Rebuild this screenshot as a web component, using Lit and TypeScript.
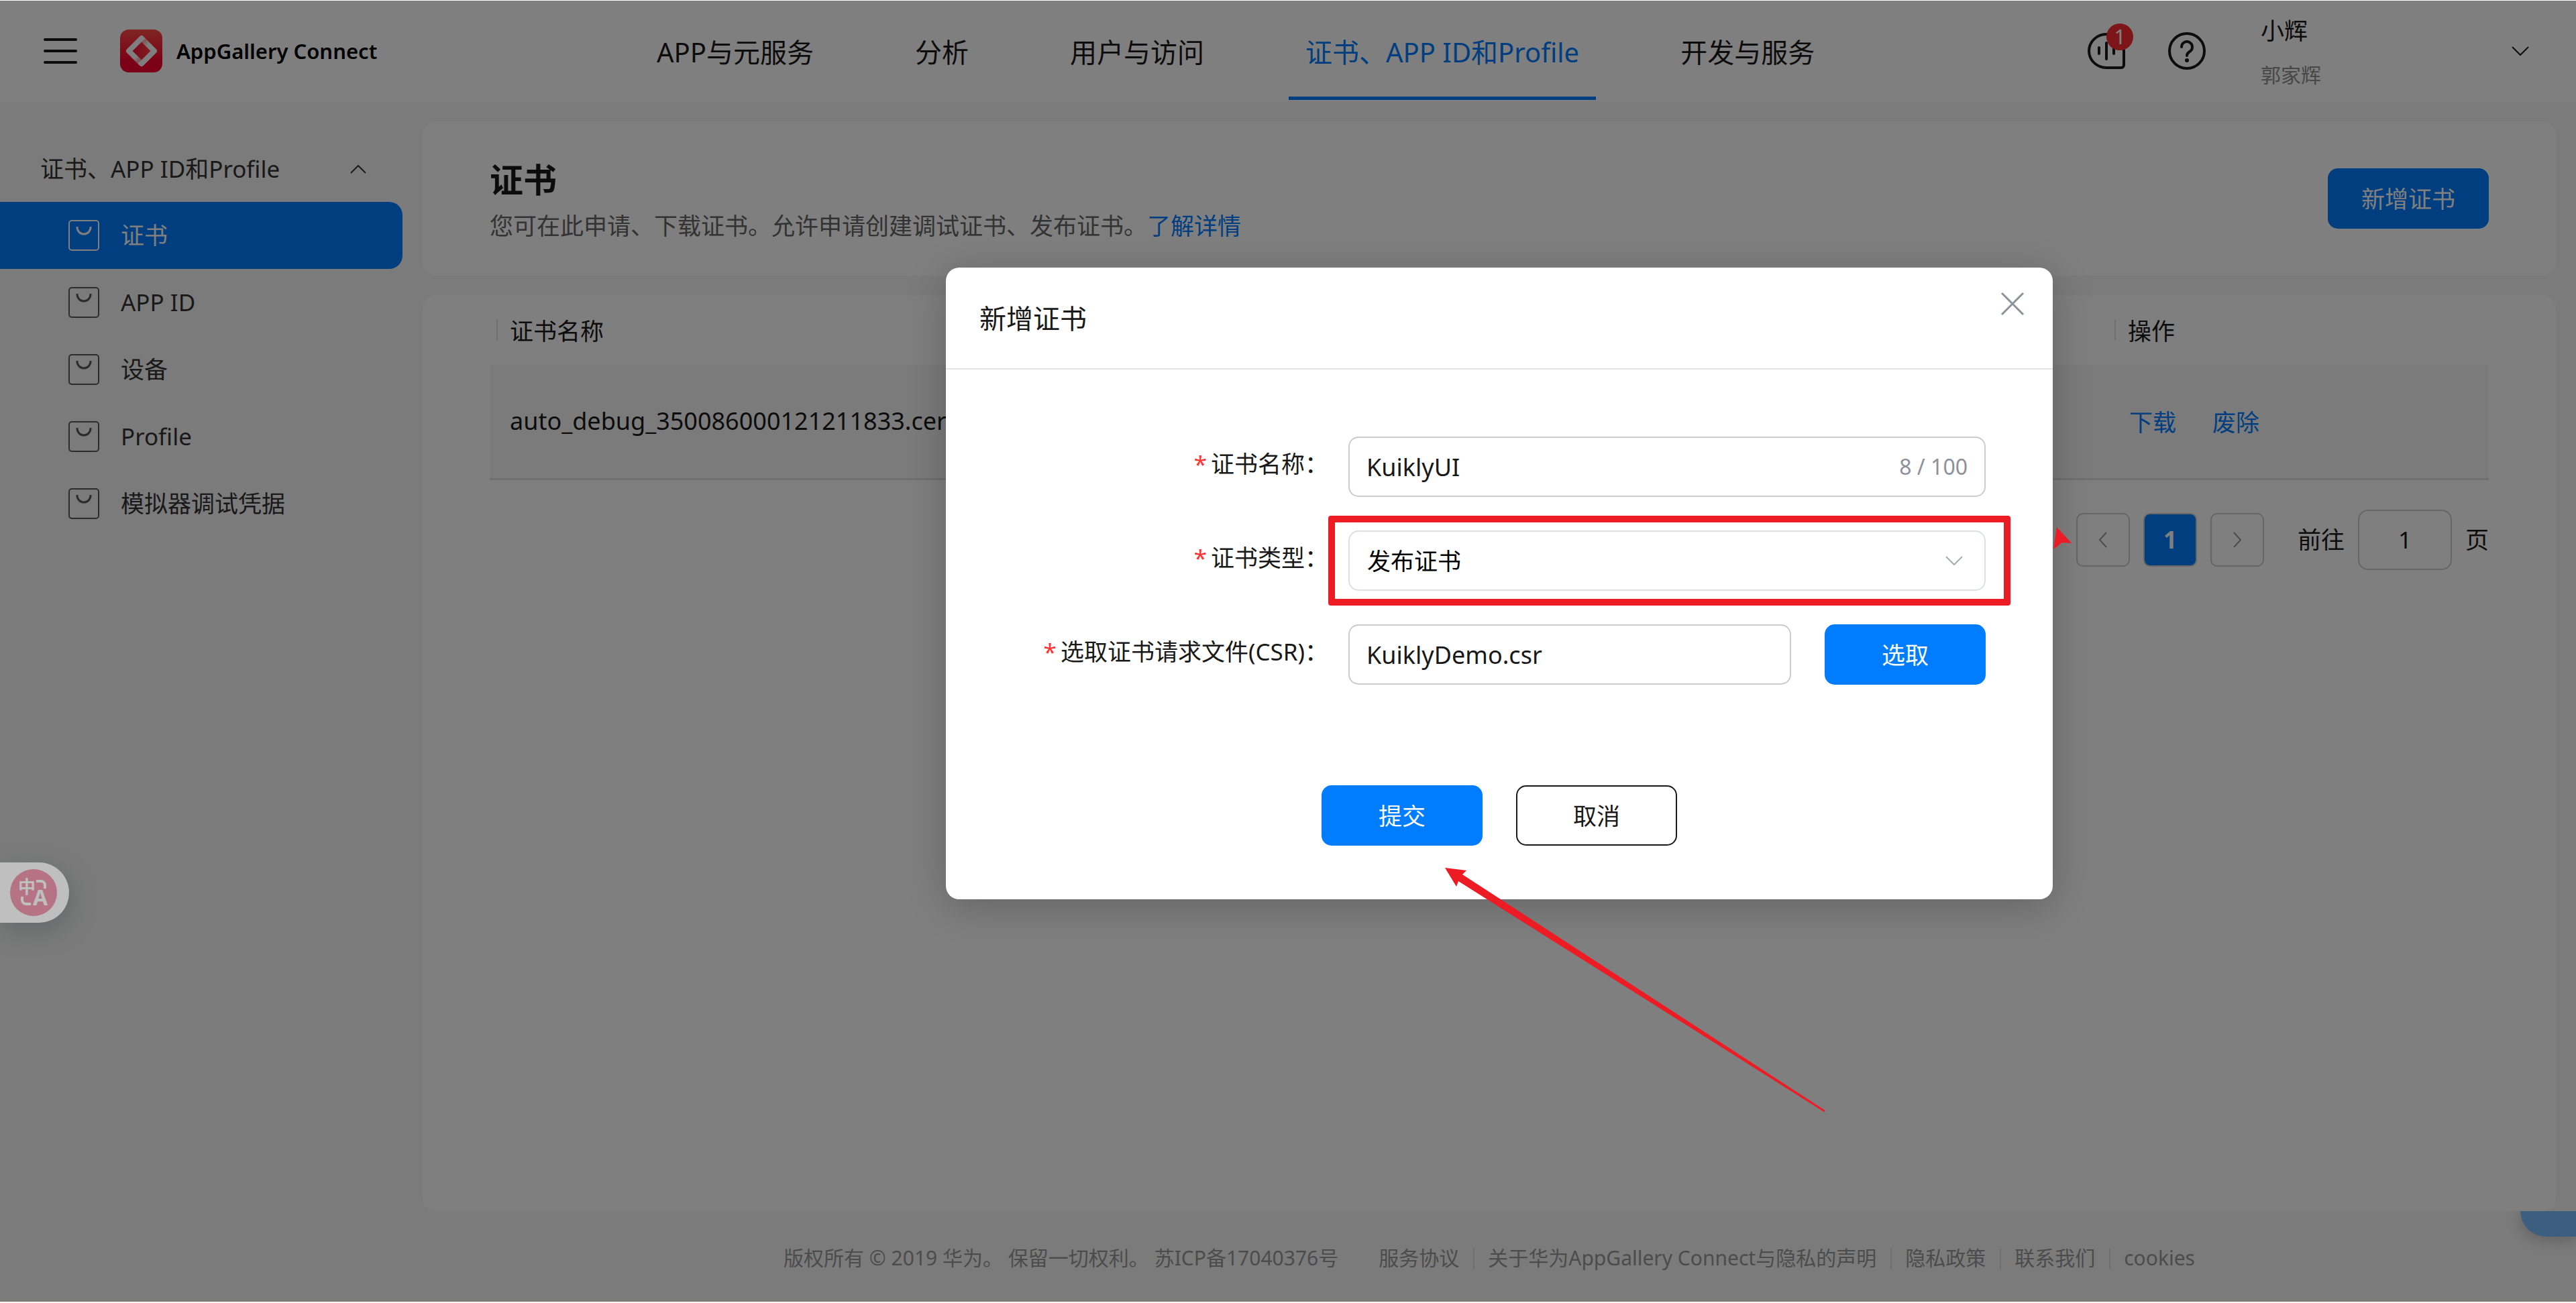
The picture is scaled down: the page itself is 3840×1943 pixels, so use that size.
import { LitElement, html, css, svg } from "lit";
import { customElement, state } from "lit/decorators.js";
import { classMap } from "lit/directives/class-map.js";

const chevron = (d: string, w: number, h: number, stroke = 2) => html`
  <svg width=${w} height=${h} viewBox="0 0 ${w} ${h}" fill="none" stroke="currentColor"
    stroke-width=${stroke} aria-hidden="true"><path d=${d} /></svg>`;

const bagIcon = html`
  <svg class="bag" width="46" height="46" viewBox="0 0 46 46" fill="none" stroke="currentColor" stroke-width="2" aria-hidden="true">
    <rect x="1" y="1" width="44" height="44" rx="4" />
    <path d="M13 10v1a10 10 0 0 0 20 0v-1" stroke-width="3" />
  </svg>`;

const logoIcon = html`
  <svg width="64" height="64" viewBox="0 0 64 64" aria-hidden="true">
    <defs>
      <linearGradient id="tile" x1="0" y1="0" x2="0" y2="1">
        <stop offset="0" stop-color="#ff4a45" />
        <stop offset="0.7" stop-color="#f8062f" />
        <stop offset="1" stop-color="#f8002f" />
      </linearGradient>
      <linearGradient id="core" x1="0" y1="0" x2="1" y2="0">
        <stop offset="0" stop-color="#f5002c" />
        <stop offset="1" stop-color="#ff4a45" />
      </linearGradient>
      <linearGradient id="fold-a" x1="0" y1="0" x2="1" y2="1">
        <stop offset="0" stop-color="#ff4a45" stop-opacity="0.5" />
        <stop offset="1" stop-color="#ff4a45" stop-opacity="0" />
      </linearGradient>
      <linearGradient id="fold-b" x1="1" y1="1" x2="0" y2="0">
        <stop offset="0" stop-color="#f8002f" stop-opacity="0.4" />
        <stop offset="1" stop-color="#f8002f" stop-opacity="0" />
      </linearGradient>
    </defs>
    <rect x="0" y="0" width="63" height="64" rx="13" fill="url(#tile)" />
    <path d="M32 13 51 32 32 51 13 32Z" fill="url(#core)" stroke="#fff" stroke-width="8" stroke-linejoin="round" />
    <path d="M35 16 42 23" stroke="url(#fold-a)" stroke-width="8" />
    <path d="M29 48 22 41" stroke="url(#fold-b)" stroke-width="8" />
  </svg>`;

const messageIcon = html`
  <svg width="56" height="54" viewBox="0 0 56 54" fill="none" stroke="currentColor" stroke-width="4" stroke-linecap="round" aria-hidden="true">
    <path d="M28 2a26 25 0 0 0-26 25 26 25 0 0 0 26 25h22a4 4 0 0 0 4-4V27A26 25 0 0 0 28 2Z" />
    <path d="M17 22v9M28 15v24M39 22v9" />
  </svg>`;

const helpIcon = html`
  <svg width="56" height="56" viewBox="0 0 56 56" fill="none" stroke="currentColor" stroke-width="4" aria-hidden="true">
    <circle cx="28" cy="28" r="26" />
    <path d="M20 22a8 8 0 1 1 12 7c-3 2-4 3-4 6" stroke-linecap="round" />
    <circle cx="28" cy="42" r="3" fill="currentColor" stroke="none" />
  </svg>`;

const arrowShape = svg`<path d="M0 0 32 4 26 10 567 362 565 364 20 20 17 28Z" />`;

@customElement("app-root")
export class AppRoot extends LitElement {
  @state() private active = 3;
  @state() private certName = "KuiklyUI";

  private tabs = ["APP与元服务", "分析", "用户与访问", "证书、APP ID和Profile", "开发与服务"];
  private menu = ["证书", "APP ID", "设备", "Profile", "模拟器调试凭据"];
  private links = ["服务协议", "关于华为AppGallery Connect与隐私的声明", "隐私政策", "联系我们", "cookies"];

  static styles = css`
    :host {
      display: block;
      font-family: "Noto Sans", "Noto Sans CJK SC", sans-serif;
      font-size: 35px;
      line-height: 50px;
      color: #191919;
    }
    * { box-sizing: border-box; }
    svg { display: block; flex: none; }
    a { color: #007dff; text-decoration: none; }
    h1, h2, p { margin: 0; }
    button, input, select { font: inherit; color: inherit; margin: 0; }
    button { cursor: pointer; padding: 0; border: 0; background: none; }

    .page {
      position: relative;
      display: flex;
      flex-direction: column;
      min-height: 100vh;
      background: #f7f7f7;
      border-top: 1px solid #fff;
      border-bottom: 2px solid #faf4f5;
    }

    .header { display: flex; align-items: center; height: 150px; padding-right: 70px; background: #fff; }
    .brand { display: flex; align-items: center; flex: 0 0 954px; padding-left: 65px; }
    .burger { display: flex; flex-direction: column; gap: 13px; width: 50px; margin-right: 64px; }
    .burger span { height: 4px; border-radius: 2px; background: #191919; }
    .brand-name { margin-left: 20px; font-size: 31px; font-weight: 600; color: #000; }
    .tabs { display: flex; flex: 1; align-self: flex-start; gap: 101px; font-size: 40px; }
    .tab { height: 148px; padding: 10px 25px 0; border-bottom: 5px solid transparent; line-height: 134px; color: #191919; white-space: nowrap; }
    .tab.on { color: #007dff; border-color: #007dff; }
    .actions { display: flex; align-items: center; }
    .message { position: relative; margin-right: 64px; }
    .badge {
      position: absolute; top: -14px; right: -12px; width: 40px; height: 40px; border-radius: 50%;
      background: #fa2d33; color: #fff; font-size: 30px; line-height: 40px; text-align: center;
    }
    .user { display: flex; align-items: center; justify-content: space-between; width: 400px; margin-left: 82px; text-align: left; }
    .user-names { display: flex; flex-direction: column; gap: 20px; line-height: 46px; padding-top: 6px; }
    .user-sub { font-size: 30px; color: #8f8f8f; }

    .body { display: flex; flex: 1; }
    .side { flex: 0 0 630px; padding: 52px 30px 0 0; color: #333; }
    .group { display: flex; align-items: center; justify-content: space-between; width: 100%; height: 98px; padding: 0 54px 0 60px; color: #333; }
    .item { display: flex; align-items: center; gap: 32px; height: 100px; padding-left: 102px; color: #333; }
    .bag { color: #595959; }
    .item.on { background: #007dff; color: #fff; border-radius: 0 20px 20px 0; }
    .item.on .bag { color: #fff; }

    .main { display: flex; flex: 1; flex-direction: column; min-width: 0; padding-top: 30px; }
    .card { margin-right: 30px; border-radius: 20px; background: #fff; }
    .intro { display: flex; align-items: center; justify-content: space-between; height: 230px; padding: 0 100px; margin-bottom: 30px; }
    .intro-text { padding-top: 12px; }
    .intro h1 { margin-bottom: 8px; font-size: 50px; line-height: 62px; }
    .intro p { color: #666; line-height: 60px; }
    .primary { width: 240px; height: 90px; border-radius: 15px; background: #007dff; color: #fff; padding-top: 2px; }
    .listing { flex: 1; padding: 0 100px; }

    table { width: 100%; border-collapse: collapse; table-layout: fixed; text-align: left; }
    th { height: 103px; padding: 2px 0 0 10px; font-weight: 400; }
    th span { position: relative; display: block; padding-left: 20px; }
    th span::before { content: ""; position: absolute; left: 0; top: 8px; width: 2px; height: 30px; background: #dcdcdc; }
    td { height: 170px; padding: 0 0 0 30px; border-bottom: 3px solid #dedede; background: #f7f7f7; }
    .file { font-size: 36px; }
    .ops { width: 568px; }
    .row-links { display: flex; gap: 54px; padding: 3px 0 0 2px; }

    .pager { display: flex; align-items: center; justify-content: flex-end; margin-top: 44px; }
    .page-btn { display: flex; align-items: center; justify-content: center; width: 80px; height: 80px; margin-right: 20px; border: 2px solid #ccc; border-radius: 10px; color: #999; }
    .page-btn.on { background: #007dff; color: #fff; font-weight: 700; }
    .jump { display: flex; align-items: center; gap: 20px; margin-left: 30px; }
    .jump input { width: 140px; height: 90px; padding: 0; border: 2px solid #ccc; border-radius: 15px; background: none; text-align: center; }

    .footer { position: relative; overflow: hidden; display: flex; justify-content: center; height: 135px; padding: 50px 30px 0 0; font-size: 30px; line-height: 40px; color: #999; }
    .copy { margin-right: 60px; }
    .links { display: flex; gap: 43px; }
    .links a { position: relative; color: #999; }
    .links a + a::before { content: ""; position: absolute; left: -22px; top: 6px; width: 2px; height: 30px; background: #dcdcdc; }
    .helper { position: absolute; top: 0; right: 0; width: 83px; height: 38px; border-radius: 0 0 0 44px; background: #7abeff; box-shadow: 0 4px 24px rgba(0, 0, 0, 0.25); }

    .mask { position: absolute; inset: 0; padding: 398px 0 0 630px; background: rgba(0, 0, 0, 0.5); }
    .dialog { position: relative; width: 1650px; margin: 0 auto; border-radius: 20px; background: #fff; box-shadow: 0 10px 60px rgba(0, 0, 0, 0.22); color: #191919; }
    .dialog-head { display: flex; justify-content: space-between; height: 152px; padding: 36px 42px 0 50px; border-bottom: 2px solid #e4e4e4; }
    .dialog-head h2 { padding-top: 15px; font-size: 40px; font-weight: 400; }
    .close { height: 36px; color: #8d9199; }
    .form { display: flex; flex-direction: column; gap: 50px; padding: 100px 100px 0; }
    .field { display: flex; }
    .label { flex: 0 0 500px; padding: 16px 30px 0 0; text-align: right; white-space: nowrap; }
    .star { margin-right: 6px; color: #ff3333; }
    .control { position: relative; flex: 1; display: flex; gap: 50px; }
    .box { flex: 1; min-width: 0; width: 100%; height: 90px; padding: 0 25px; border: 2px solid #ccc; border-radius: 15px; background: #fff; outline: none; font-size: 36px; }
    select.box { appearance: none; border-color: #dcdfe6; padding: 2px 26px 0; color: #000; font-size: 35px; }
    .count { position: absolute; right: 27px; top: 20px; font-size: 32px; color: #8d9199; }
    .drop { position: absolute; right: 34px; top: 38px; color: #a8abb2; pointer-events: none; }
    .mark { position: absolute; inset: -22px -37px -22px -30px; border: 10px solid #ed1c24; border-radius: 4px; pointer-events: none; }
    .dialog-foot { display: flex; justify-content: center; gap: 50px; padding: 150px 0 80px; }
    .ghost { width: 240px; height: 90px; border: 2px solid #191919; border-radius: 15px; background: #fff; padding-top: 2px; }
    .pointer { position: absolute; left: 744px; top: 895px; fill: #ed1c24; pointer-events: none; }
    .pointer-tip { position: absolute; left: 1650px; top: 386px; fill: #ed1c24; }

    .translate { position: absolute; left: 0; top: 1285px; display: flex; align-items: center; width: 103px; height: 90px; padding-left: 15px; border-radius: 0 45px 45px 0; background: #bfbfbf; box-shadow: 4px 12px 32px rgba(80, 90, 90, 0.5); }
    .translate text { fill: #bfbfbf; font-weight: 700; }
  `;

  render() {
    return html`
      <div class="page">
        <header class="header">
          <div class="brand">
            <button class="burger" aria-label="菜单"><span></span><span></span><span></span></button>
            ${logoIcon}
            <span class="brand-name">AppGallery Connect</span>
          </div>
          <nav class="tabs">
            ${this.tabs.map((t, i) => html`
              <a href="#" class=${classMap({ tab: true, on: i === this.active })}
                @click=${(e: Event) => { e.preventDefault(); this.active = i; }}>${t}</a>`)}
          </nav>
          <div class="actions">
            <button class="message" aria-label="消息">${messageIcon}<span class="badge">1</span></button>
            <button aria-label="帮助">${helpIcon}</button>
            <button class="user">
              <span class="user-names"><span>小辉</span><span class="user-sub">郭家辉</span></span>
              ${chevron("M1 1 13 13 25 1", 26, 14)}
            </button>
          </div>
        </header>

        <div class="body">
          <aside class="side">
            <button class="group">证书、APP ID和Profile ${chevron("M1 12 12 1 23 12", 24, 13)}</button>
            ${this.menu.map((m, i) => html`
              <a href="#" class=${classMap({ item: true, on: i === 0 })}>${bagIcon}<span>${m}</span></a>`)}
          </aside>

          <main class="main">
            <section class="card intro">
              <div class="intro-text">
                <h1>证书</h1>
                <p>您可在此申请、下载证书。允许申请创建调试证书、发布证书。<a href="#">了解详情</a></p>
              </div>
              <button class="primary">新增证书</button>
            </section>

            <section class="card listing">
              <table>
                <thead>
                  <tr><th scope="col"><span>证书名称</span></th><th scope="col" class="ops"><span>操作</span></th></tr>
                </thead>
                <tbody>
                  <tr>
                    <td class="file">auto_debug_350086000121211833.cer</td>
                    <td><div class="row-links"><a href="#">下载</a><a href="#">废除</a></div></td>
                  </tr>
                </tbody>
              </table>
              <div class="pager">
                <button class="page-btn" aria-label="上一页">${chevron("M12 1 2 12 12 23", 14, 24)}</button>
                <button class="page-btn on">1</button>
                <button class="page-btn" aria-label="下一页">${chevron("M2 1 12 12 2 23", 14, 24)}</button>
                <label class="jump">前往 <input type="text" .value=${"1"} /> 页</label>
              </div>
            </section>

            <footer class="footer">
              <span class="copy">版权所有 © 2019 华为。 保留一切权利。 苏ICP备17040376号</span>
              <nav class="links">${this.links.map((l) => html`<a href="#">${l}</a>`)}</nav>
              <div class="helper"></div>
            </footer>
          </main>
        </div>

        <div class="mask">
          <div class="dialog" role="dialog" aria-modal="true" aria-labelledby="dialog-title">
            <div class="dialog-head">
              <h2 id="dialog-title">新增证书</h2>
              <button class="close" aria-label="关闭">${chevron("M2 2 34 34M34 2 2 34", 36, 36, 3)}</button>
            </div>
            <form @submit=${(e: Event) => e.preventDefault()}>
              <div class="form">
                <div class="field">
                  <label class="label" for="name"><span class="star">*</span>证书名称：</label>
                  <div class="control">
                    <input id="name" class="box" type="text" maxlength="100" .value=${this.certName}
                      @input=${(e: Event) => { this.certName = (e.target as HTMLInputElement).value; }} />
                    <span class="count">${this.certName.length} / 100</span>
                  </div>
                </div>
                <div class="field">
                  <label class="label" for="type"><span class="star">*</span>证书类型：</label>
                  <div class="control">
                    <select id="type" class="box"><option>发布证书</option></select>
                    <span class="drop">${chevron("M1 1 13 13 25 1", 26, 14)}</span>
                    <span class="mark"></span>
                  </div>
                </div>
                <div class="field">
                  <label class="label" for="csr"><span class="star">*</span>选取证书请求文件(CSR)：</label>
                  <div class="control">
                    <input id="csr" class="box" type="text" readonly .value=${"KuiklyDemo.csr"} />
                    <button class="primary" type="button">选取</button>
                  </div>
                </div>
              </div>
              <div class="dialog-foot">
                <button class="primary" type="submit">提交</button>
                <button class="ghost" type="button">取消</button>
              </div>
            </form>
            <svg class="pointer" width="568" height="365" viewBox="0 0 568 365" aria-hidden="true">${arrowShape}</svg>
            <svg class="pointer-tip" width="28" height="34" viewBox="0 0 28 34" aria-hidden="true"><path d="M6 1 28 25 14 24 1 34Z" /></svg>
          </div>
        </div>

        <button class="translate" aria-label="翻译">
          <svg width="71" height="71" viewBox="0 0 71 71" aria-hidden="true">
            <circle cx="35" cy="35" r="35" fill="#b57384" />
            <text x="12" y="36" font-size="26">中</text>
            <text x="34" y="54" font-size="32">A</text>
            <path d="M39 18h7a6 6 0 0 1 6 6v5M18 41v5a6 6 0 0 0 6 6h7" fill="none" stroke="#bfbfbf" stroke-width="4" />
          </svg>
        </button>
      </div>
    `;
  }
}
